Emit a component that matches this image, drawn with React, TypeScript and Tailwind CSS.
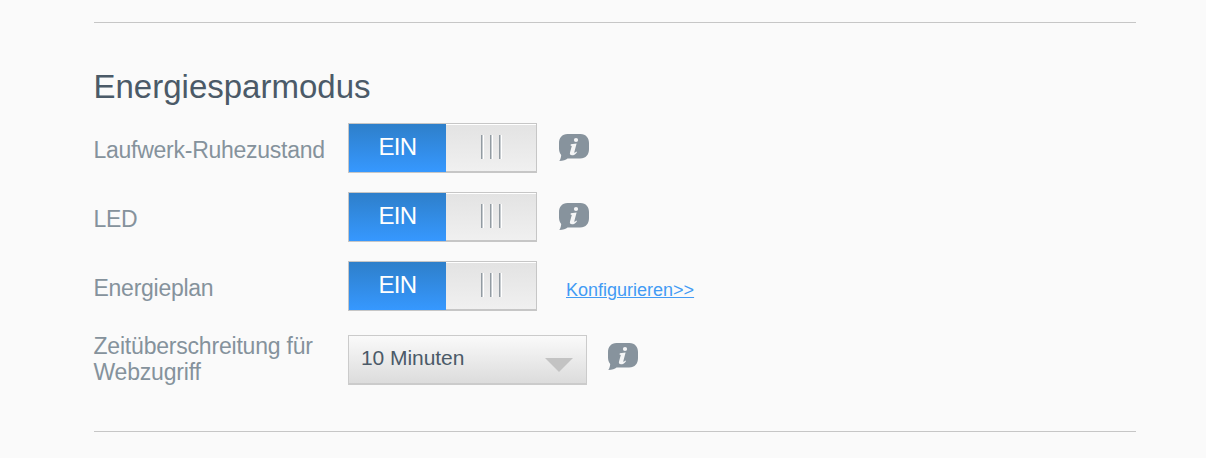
import React from "react";

function InfoIcon() {
  return (
    <svg width="30" height="28" viewBox="0 0 30 28" className="block shrink-0" aria-hidden="true">
      <path
        d="M8.500 0H21.500C27 0 30 4 30 9V15C30 20.500 27 24.500 21 24.500H8.500C7 26 4 27 0.300 27C1.500 25.300 2 23.500 2.200 21C0.700 19.300 0 17 0 14.500V9C0 4 3 0 8.500 0Z"
        fill="#87939d"
      />
      <circle cx="17" cy="6" r="2.100" fill="#f4f5f6" />
      <path
        d="M11.800 10.200L17.600 9.500L15.300 18.200C15.200 19 15.800 18.800 17.400 17.400L18 18.200C16.300 20.500 14.700 21.300 13 21.300C11.300 21.300 10.500 20.200 11 18.500L12.800 12L11.500 11.600Z"
        fill="#f4f5f6"
      />
    </svg>
  );
}

function Grip() {
  return <span className="h-6 w-[3px] border-l border-r border-l-[#929ba2] border-r-white bg-[#c6cbcf]" />;
}

function Toggle() {
  return (
    <button
      type="button"
      role="switch"
      aria-checked="true"
      className="flex h-[50px] w-[189px] shrink-0 border border-[#c6c6c6] bg-[#c6c6c6]"
    >
      <span className="flex h-12 w-[97px] items-center justify-center bg-linear-to-b from-[#2e7fca] to-[#3698ff] pb-[3px] text-[24px] leading-[27px] tracking-[-0.6px] text-white">
        EIN
      </span>
      <span className="flex h-[47px] flex-1 items-center justify-center gap-[6px] border-t border-white bg-linear-to-b from-[#e3e3e3] to-[#f0f0f0] pb-[3px] pl-px">
        <Grip />
        <Grip />
        <Grip />
      </span>
    </button>
  );
}

function Row({ label, children }: { label: string; children: React.ReactNode }) {
  return (
    <div className="mb-[19px] flex h-[50px]">
      <div className="-ml-[0.5px] w-[254.5px] shrink-0 pt-[14px] text-[23px] leading-[26px] tracking-[-0.26px]">{label}</div>
      <Toggle />
      {children}
    </div>
  );
}

export default function App() {
  return (
    <main className="h-[458px] w-[1206px] overflow-hidden bg-[#fafafa] pt-[22px] pl-[94px] font-['Liberation_Sans',Arial,sans-serif] text-[#85929c]">
      <section className="h-[410px] w-[1042px] border-y border-[#c6c6c6] pt-[44px]">
        <h1 className="-ml-[0.5px] h-14 text-[33px] leading-[40px] text-[#4b5a68]">Energiesparmodus</h1>
        <Row label="Laufwerk-Ruhezustand">
          <div className="ml-[22px] pt-[11px]"><InfoIcon /></div>
        </Row>
        <Row label="LED">
          <div className="ml-[22px] pt-[11px]"><InfoIcon /></div>
        </Row>
        <Row label="Energieplan">
          <a href="#" className="ml-[29px] pt-[19px] text-[18px] leading-[21px] text-[#429bf4] underline decoration-1 underline-offset-1">
            Konfigurieren&gt;&gt;
          </a>
        </Row>
        <div className="flex pt-[3px]">
          <div className="-ml-[0.5px] w-[254.5px] shrink-0 text-[23px] leading-[26px] tracking-[-0.2px]">
            Zeitüberschreitung für
            <br />
            Webzugriff
          </div>
          <div className="mt-[2px] flex h-[50px] w-[239px] shrink-0 justify-between border border-b-2 border-[#cbcbcb] bg-linear-to-b from-[#fafafa] to-[#dcdcdc] pr-[13px] pl-3">
            <span className="pt-[10px] text-[21px] leading-[24px] tracking-[-0.06px] text-[#4b5a68]">10 Minuten</span>
            <svg width="28" height="14" viewBox="0 0 28 14" className="mt-[22px]" aria-hidden="true">
              <path d="M0 0H28L14 14Z" fill="#c3c3c3" />
            </svg>
          </div>
          <div className="ml-[21px] pt-[10px]"><InfoIcon /></div>
        </div>
      </section>
    </main>
  );
}
